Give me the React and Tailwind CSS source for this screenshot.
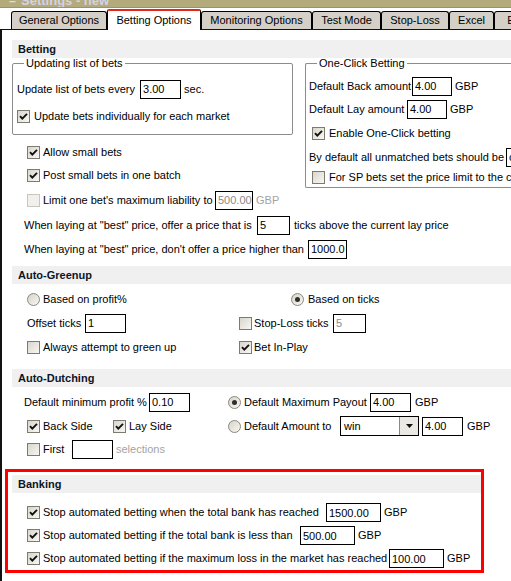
import React from "react";

// Small classic-Windows style widgets used across the settings page
const Check = ({ checked = false, disabled = false }) => (
  <span
    className={
      "w-[13px] h-[13px] shrink-0 border flex items-center justify-center " +
      (disabled
        ? "border-[#c9c6bc] bg-[#f1f0ec]"
        : "border-[#7d7a70] bg-linear-to-br from-[#d9d6cc] to-[#f8f7f3]")
    }
  >
    {checked && (
      <svg width="9" height="9" viewBox="0 0 9 9">
        <path d="M1 4.2 L3.3 6.6 L8 1.8" fill="none" stroke="#111" strokeWidth="1.9" />
      </svg>
    )}
  </span>
);

const Radio = ({ checked = false }) => (
  <span className="w-[13px] h-[13px] shrink-0 rounded-full border border-[#8a877d] bg-linear-to-br from-[#d6d3c9] to-[#f8f7f3] flex items-center justify-center">
    {checked && <span className="w-[5px] h-[5px] rounded-full bg-[#2e2e2e]" />}
  </span>
);

const Box = ({ value = "", w, gray = false }) => (
  <input
    readOnly
    value={value}
    className={
      "h-[19px] shrink-0 border border-black bg-white pl-[2px] pr-0 outline-none " +
      w +
      (gray ? " text-[#8a8a8a]" : " text-black")
    }
  />
);

const Band = ({ title, className = "" }) => (
  <div className={"h-[18px] bg-[#f0f0f0] flex items-center pl-[6px] font-bold text-[#0d1424] " + className}>
    {title}
  </div>
);

const tabs = [
  { label: "General Options", w: "w-[96px]" },
  { label: "Betting Options", w: "w-[94px]", active: true },
  { label: "Monitoring Options", w: "w-[111px]" },
  { label: "Test Mode", w: "w-[69px]" },
  { label: "Stop-Loss", w: "w-[68px]" },
  { label: "Excel", w: "w-[45px]" },
  { label: "Events", w: "w-[60px]" },
];

export default function App() {
  return (
    <div className="w-[511px] h-[581px] overflow-hidden bg-white text-[11px] leading-[13px] text-black font-['Liberation_Sans',Arial,sans-serif] flex flex-col">
      {/* window caption, mostly scrolled off */}
      <div className="h-[8px] shrink-0 bg-[#b3ab7b] border-b border-[#9b9468] overflow-hidden flex">
        <span className="ml-[9px] -mt-[7px] text-[12px] font-bold text-[#ddd9ea] leading-[14px]">=</span>
        <span className="ml-[5px] -mt-[6px] text-[13px] font-bold text-[#d6d2e6] leading-[14px] whitespace-nowrap">
          Settings - new
        </span>
      </div>

      {/* tab strip */}
      <div className="h-[21px] shrink-0 flex items-end pl-[11px] relative z-10 whitespace-nowrap">
        {tabs.map((t) =>
          t.active ? (
            <div
              key={t.label}
              className={t.w + " shrink-0 h-[21px] -mb-[1px] bg-white border-x border-black border-t-2 border-t-[#e2271b] rounded-t-[2px] flex items-center justify-center pb-[1px]"}
            >
              {t.label}
            </div>
          ) : (
            <div
              key={t.label}
              className={t.w + " shrink-0 h-[18px] bg-[#d4d0c8] border border-b-0 border-black rounded-t-[3px] flex items-center justify-center"}
            >
              {t.label}
            </div>
          )
        )}
      </div>

      {/* page body */}
      <div className="flex-1 border-l-2 border-t border-[#121212] flex flex-col whitespace-nowrap">
        <Band title="Betting" className="mt-[10px] ml-[10px]" />

        <div className="flex items-start">
          <div className="ml-[10px] w-[281px] shrink-0 flex flex-col">
            <fieldset className="border border-[#8c8c8c] rounded-[2px] pt-[8px] pb-[6px] pl-[4px]">
              <legend className="ml-[7px] px-[2px] leading-[11px]">Updating list of bets</legend>
              <div className="h-[24px] flex items-center">
                <span>Update list of bets every</span>
                <span className="ml-[5px]"><Box value="3.00" w="w-[41px]" /></span>
                <span className="ml-[3px]">sec.</span>
              </div>
              <div className="h-[24px] mt-[3px] flex items-center">
                <Check checked />
                <span className="ml-[4px]">Update bets individually for each market</span>
              </div>
            </fieldset>
            <div className="mt-[6px] h-[23px] pl-[15px] flex items-center">
              <Check checked />
              <span className="ml-[3px]">Allow small bets</span>
            </div>
            <div className="h-[23px] pl-[15px] flex items-center">
              <Check checked />
              <span className="ml-[3px]">Post small bets in one batch</span>
            </div>
          </div>

          <fieldset className="ml-[12px] w-[240px] shrink-0 border border-r-0 border-[#8c8c8c] rounded-l-[2px] pt-[6px] pl-[3px]">
            <legend className="ml-[8px] px-[2px] leading-[11px]">One-Click Betting</legend>
            <div className="h-[22px] flex items-center">
              <span className="w-[103px]">Default Back amount</span>
              <Box value="4.00" w="w-[40px]" />
              <span className="ml-[3px]">GBP</span>
            </div>
            <div className="h-[24px] flex items-center">
              <span className="w-[98px]">Default Lay amount</span>
              <Box value="4.00" w="w-[40px]" />
              <span className="ml-[3px]">GBP</span>
            </div>
            <div className="h-[25px] pl-[3px] flex items-center">
              <Check checked />
              <span className="ml-[4px]">Enable One-Click betting</span>
            </div>
            <div className="h-[22px] flex items-center">
              <span className="w-[197px] shrink-0">By default all unmatched bets should be</span>
              <Box value="cancelled" w="w-[80px]" />
            </div>
            <div className="h-[19px] pl-[3px] flex items-center">
              <Check />
              <span className="ml-[4px]">For SP bets set the price limit to the current price</span>
            </div>
          </fieldset>
        </div>

        <div className="mt-[1px] h-[22px] pl-[25px] flex items-center">
          <Check disabled />
          <span className="ml-[3px] w-[172px]">Limit one bet's maximum liability to</span>
          <Box value="500.00" w="w-[38px]" gray />
          <span className="ml-[3px] text-[#a3a3a3]">GBP</span>
        </div>
        <div className="mt-[2px] h-[24px] pl-[22px] flex items-center">
          <span className="w-[233px]">When laying at "best" price, offer a price that is</span>
          <Box value="5" w="w-[33px]" />
          <span className="ml-[4px]">ticks above the current lay price</span>
        </div>
        <div className="h-[24px] pl-[22px] flex items-center">
          <span className="w-[284px]">When laying at "best" price, don't offer a price higher than</span>
          <Box value="1000.0" w="w-[39px]" />
        </div>

        <Band title="Auto-Greenup" className="mt-[5px] ml-[10px]" />
        <div className="mt-[3px] h-[24px] pl-[25px] flex items-center">
          <span className="w-[264px] flex items-center">
            <Radio />
            <span className="ml-[3px]">Based on profit%</span>
          </span>
          <Radio checked />
          <span className="ml-[4px]">Based on ticks</span>
        </div>
        <div className="h-[24px] pl-[25px] flex items-center">
          <span className="w-[212px] flex items-center">
            <span className="w-[58px]">Offset ticks</span>
            <Box value="1" w="w-[41px]" />
          </span>
          <Check />
          <span className="ml-[2px] w-[79px]">Stop-Loss ticks</span>
          <Box value="5" w="w-[33px]" gray />
        </div>
        <div className="h-[24px] pl-[25px] flex items-center">
          <span className="w-[212px] flex items-center">
            <Check />
            <span className="ml-[3px]">Always attempt to green up</span>
          </span>
          <Check checked />
          <span className="ml-[2px]">Bet In-Play</span>
        </div>

        <Band title="Auto-Dutching" className="mt-[10px] ml-[10px]" />
        <div className="mt-[3px] h-[24px] pl-[22px] flex items-center">
          <span className="w-[204px] flex items-center">
            <span className="w-[125px]">Default minimum profit %</span>
            <Box value="0.10" w="w-[41px]" />
          </span>
          <Radio checked />
          <span className="ml-[3px] w-[126px]">Default Maximum Payout</span>
          <Box value="4.00" w="w-[41px]" />
          <span className="ml-[4px]">GBP</span>
        </div>
        <div className="h-[24px] pl-[25px] flex items-center">
          <span className="w-[201px] flex items-center">
            <span className="w-[86px] flex items-center">
              <Check checked />
              <span className="ml-[3px]">Back Side</span>
            </span>
            <Check checked />
            <span className="ml-[3px]">Lay Side</span>
          </span>
          <Radio />
          <span className="ml-[3px] w-[96px]">Default Amount to</span>
          <div className="w-[79px] h-[20px] shrink-0 border border-black bg-white flex">
            <span className="flex-1 pl-[3px] flex items-center pt-[1px]">win</span>
            <span className="w-[19px] border-l border-[#8a8a8a] bg-[#ebe9e3] flex items-center justify-center">
              <svg width="7" height="4" viewBox="0 0 7 4">
                <path d="M0 0 H7 L3.5 4 Z" fill="#111" />
              </svg>
            </span>
          </div>
          <span className="ml-[3px]"><Box value="4.00" w="w-[41px]" /></span>
          <span className="ml-[4px]">GBP</span>
        </div>
        <div className="h-[22px] pl-[25px] flex items-center">
          <Check />
          <span className="ml-[3px] w-[29px]">First</span>
          <Box value="" w="w-[41px]" />
          <span className="ml-[3px] text-[#a3a3a3]">selections</span>
        </div>

        {/* highlighted banking block */}
        <div className="mt-[9px] ml-[3px] w-[479px] h-[104px] shrink-0 border-[3px] border-[#ff0000] flex flex-col">
          <Band title="Banking" className="mt-[3px] ml-[4px]" />
          <div className="mt-[8px] h-[23px] pl-[19px] flex items-center">
            <Check checked />
            <span className="ml-[3px] w-[283px]">Stop automated betting when the total bank has reached</span>
            <Box value="1500.00" w="w-[55px]" />
            <span className="ml-[3px]">GBP</span>
          </div>
          <div className="h-[23px] pl-[19px] flex items-center">
            <Check checked />
            <span className="ml-[3px] w-[257px]">Stop automated betting if the total bank is less than</span>
            <Box value="500.00" w="w-[55px]" />
            <span className="ml-[3px]">GBP</span>
          </div>
          <div className="h-[23px] pl-[19px] flex items-center">
            <Check checked />
            <span className="ml-[3px] w-[346px]">Stop automated betting if the maximum loss in the market has reached</span>
            <Box value="100.00" w="w-[55px]" />
            <span className="ml-[3px]">GBP</span>
          </div>
        </div>
      </div>
    </div>
  );
}
